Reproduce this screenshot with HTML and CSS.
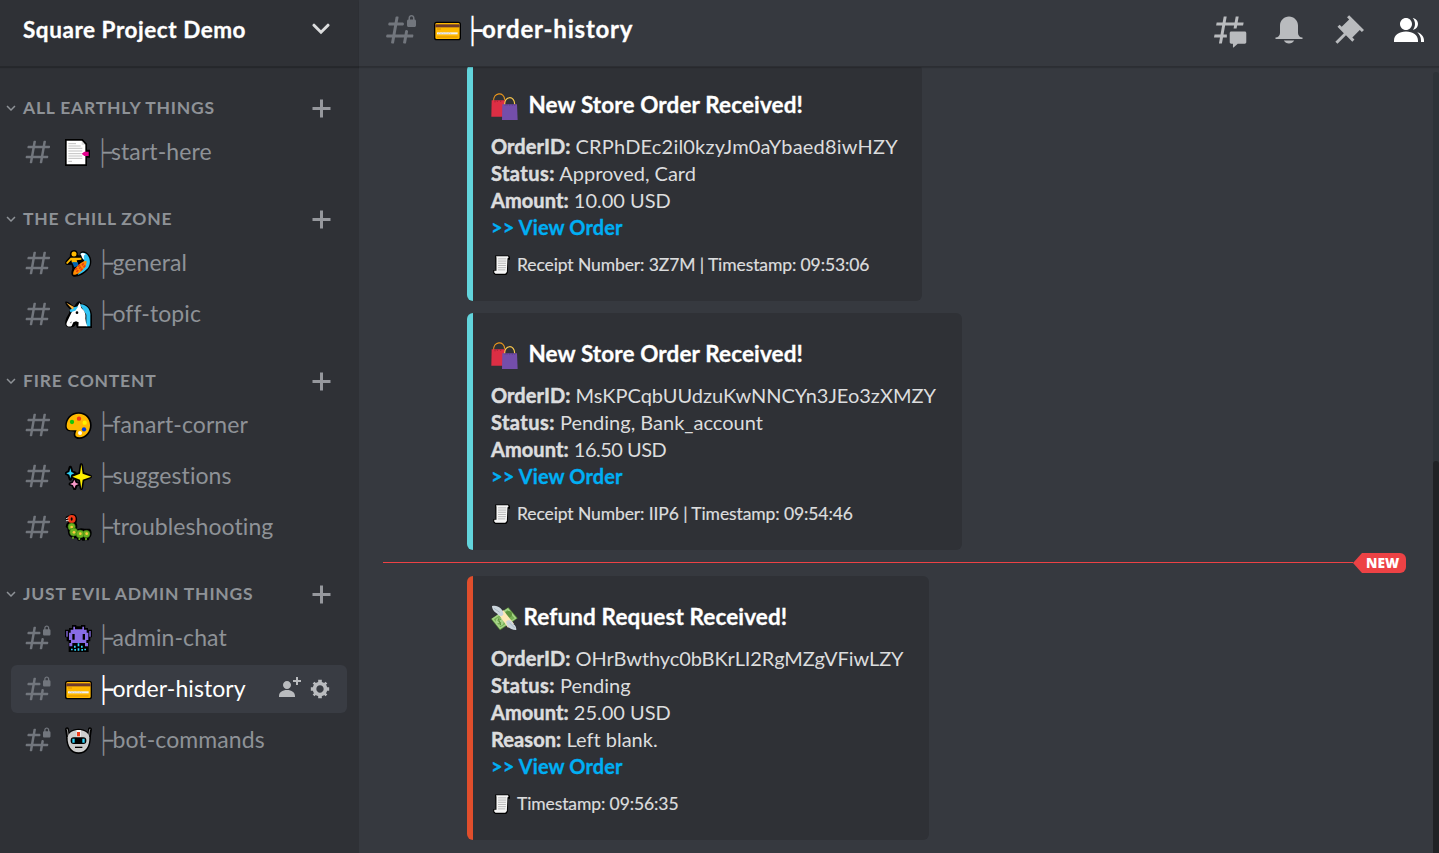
FILE: index.html
```html
<!DOCTYPE html>
<html lang="en">
<head>
<meta charset="utf-8">
<title>Square Project Demo</title>
<link rel="stylesheet" href="styles.css">
</head>
<body>
<svg class="defs" aria-hidden="true">
  <symbol id="hash" viewBox="0 0 24 24"><path fill-rule="evenodd" d="M5.88657 21C5.57547 21 5.3399 20.7189 5.39427 20.4126L6.00001 17H2.59511C2.28449 17 2.04905 16.7198 2.10259 16.4138L2.27759 15.4138C2.31946 15.1746 2.52722 15 2.77011 15H6.35001L7.41001 9H4.00511C3.69449 9 3.45905 8.71977 3.51259 8.41381L3.68759 7.41381C3.72946 7.17456 3.93722 7 4.18011 7H7.76001L8.39677 3.41262C8.43914 3.17391 8.64664 3 8.88907 3H9.87344C10.1845 3 10.4201 3.28107 10.3657 3.58738L9.76001 7H15.76L16.3968 3.41262C16.4391 3.17391 16.6466 3 16.8891 3H17.8734C18.1845 3 18.4201 3.28107 18.3657 3.58738L17.76 7H21.1649C21.4755 7 21.711 7.28023 21.6574 7.58619L21.4824 8.58619C21.4406 8.82544 21.2328 9 20.9899 9H17.41L16.35 15H19.7549C20.0655 15 20.301 15.2802 20.2474 15.5862L20.0724 16.5862C20.0306 16.8254 19.8228 17 19.5799 17H16L15.3632 20.5874C15.3209 20.8261 15.1134 21 14.8709 21H13.8866C13.5755 21 13.3399 20.7189 13.3943 20.4126L14 17H8.00001L7.36325 20.5874C7.32088 20.8261 7.11337 21 6.87094 21H5.88657ZM9.41045 9L8.35045 15H14.3504L15.4104 9H9.41045Z"/></symbol>
  <symbol id="hash-lock" viewBox="0 0 24 24"><path d="M14 8C14 7.44772 13.5523 7 13 7H9.76001L10.3657 3.58738C10.4201 3.28107 10.1845 3 9.87344 3H8.88907C8.64664 3 8.43914 3.17391 8.39677 3.41262L7.76001 7H4.18011C3.93722 7 3.72946 7.17456 3.68759 7.41381L3.51259 8.41381C3.45905 8.71977 3.69449 9 4.00511 9H7.41001L6.35001 15H2.77011C2.52722 15 2.31946 15.1746 2.27759 15.4138L2.10259 16.4138C2.04905 16.7198 2.28449 17 2.59511 17H6.00001L5.39427 20.4126C5.3399 20.7189 5.57547 21 5.88657 21H6.87094C7.11337 21 7.32088 20.8261 7.36325 20.5874L8.00001 17H14L13.3943 20.4126C13.3399 20.7189 13.5755 21 13.8866 21H14.8709C15.1134 21 15.3209 20.8261 15.3632 20.5874L16 17H19.5799C19.8228 17 20.0306 16.8254 20.0724 16.5862L20.2474 15.5862C20.301 15.2802 20.0655 15 19.7549 15H16.35L16.6758 13.1558C16.7823 12.5529 16.3186 12 15.7063 12C15.2286 12 14.8199 12.3429 14.7368 12.8133L14.3504 15H8.35045L9.41045 9H13C13.5523 9 14 8.55228 14 8Z"/><path fill-rule="evenodd" d="M21.025 5V4C21.025 2.88 20.05 2 19 2C17.95 2 17 2.88 17 4V5C16.4477 5 16 5.44772 16 6V9C16 9.55228 16.4477 10 17 10H21C21.5523 10 22 9.55228 22 9V5.975C22 5.43652 21.5635 5 21.025 5ZM20 5H18V4C18 3.42857 18.4667 3 19 3C19.5333 3 20 3.42857 20 4V5Z"/></symbol>
  <symbol id="chev" viewBox="0 0 24 24"><path d="M16.59 8.59L12 13.17L7.41 8.59L6 10L12 16L18 10Z"/></symbol>
  <symbol id="plus" viewBox="0 0 18 18"><path d="M15 10H10V15H8V10H3V8H8V3H10V8H15Z"/></symbol>
  <symbol id="credit" viewBox="0 0 81 81"><rect y="14" width="81" height="56" rx="8" fill="#000"/><rect x="4" y="18" width="73" height="48" rx="4" fill="#ffb900"/><path d="M4 22h73v9H4z" fill="#6b3a2e"/><path d="M9 36h12M9 60h62" stroke="#d98a00" stroke-width="2.5"/><path d="M9 46h62v6H9z" fill="#f2f2f2"/><path d="M12 51l5-4 4 4 5-4 5 4 5-4 5 4 5-4 6 4" fill="none" stroke="#b9b9c4" stroke-width="1.5"/></symbol>
  <symbol id="bags" viewBox="0 0 81 81"><path d="M8 25C6-3 40-5 41 20" fill="none" stroke="#e8951c" stroke-width="3.5"/><path d="M2 22h40v49H1z" fill="#dd2e44"/><path d="M12 23v5m7-5v4m10-4v4" stroke="#8f1c2d" stroke-width="2"/><path d="M41 36C39 8 72 6 71 35" fill="none" stroke="#ffcc4d" stroke-width="3.5"/><path d="M34 34h44l2 48H33z" fill="#744eaa"/><path d="M42 34v4m6-4v4m8-4v4m8-4v4m7-4v4" stroke="#50337d" stroke-width="2"/></symbol>
  <symbol id="receipt" viewBox="0 0 54 63"><path d="M7 1h43l4 5v9h-6l-1 41-5 7H7l-6-5V47h7z" fill="#000"/><path d="M10 4h37l3 3-4 4-2 43-5 5H8l-4-4v-5h7V9z" fill="#f5f5f5"/><path d="M16 12h26M16 19h26M16 26h25M16 33h25M16 40h25M16 47h23" stroke="#aaa" stroke-width="2.5"/></symbol>
</svg>
<div class="app">
  <aside class="sidebar">
    <header class="server">
      <span class="server-name">Square Project Demo</span>
      <svg class="server-chev" viewBox="0 0 18 12"><path d="M2 2.2l7 7 7-7" fill="none" stroke="#dcddde" stroke-width="3" stroke-linecap="round"/></svg>
    </header>
    <nav class="channels">
      <section class="group">
        <div class="category"><svg class="fold"><use href="#chev"/></svg><span>ALL EARTHLY THINGS</span><svg class="add"><use href="#plus"/></svg></div>
        <a class="channel narrow"><svg class="kind"><use href="#hash"/></svg>
          <svg class="emoji" viewBox="0 0 81 81"><path d="M0 0h53l13 14v18h9v24h-9v25H0z"/><path d="M5 5h45l11 12v59H5z" fill="#fff"/><path d="M50 5v12h11z" fill="#ddd"/><path d="M10 14h23M10 21h37M10 28h42M10 36h42M10 44h40M10 51h42M10 58h42M10 67h11" stroke="#b5b5b5" stroke-width="2.5"/><path d="M50 44l8-6h13v13H58z" fill="#e3008c"/></svg>
          <span class="tee">├</span><span class="name">start-here</span></a>
      </section>
      <section class="group">
        <div class="category"><svg class="fold"><use href="#chev"/></svg><span>THE CHILL ZONE</span><svg class="add"><use href="#plus"/></svg></div>
        <a class="channel"><svg class="kind"><use href="#hash"/></svg>
          <svg class="emoji" viewBox="0 0 81 81"><path d="M27 0c8 0 13 7 11 15l6 2c0-14 10-16 20-10 18 11 19 36 7 50-12 16-32 25-45 23-9-2-8-14-4-24L20 44 8 45C-2 44 0 36 3 32l12-13C13 7 18 1 27 0z"/><path d="M46 12c5-7 16-4 21 2 12 14 9 34-2 44-9 9-18 14-27 17l20-44c-8-5-6-14-12-19z" fill="#31c4f3"/><path d="M46 12c7-6 14-2 16 2-6 0-7 6-4 14-8-2-6-10-12-16z" fill="#fff"/><circle cx="27" cy="12" r="7.5" fill="#ffb900"/><path d="M17 23h16l16 0v6l-14 2 3 10-17-2-2-9L7 42l-4-3z" fill="#ffb900"/><path d="M21 36l17 1 3 10-13 5z" fill="#0063b1"/><path d="M64 32c5 12-19 44-39 42-5-9 16-38 39-42z" fill="#ff8c00"/><path d="M56 40L33 68M61 46L45 64M45 44L28 62" stroke="#e63b12" stroke-width="5" stroke-dasharray="8 5"/></svg>
          <span class="tee">├</span><span class="name">general</span></a>
        <a class="channel"><svg class="kind"><use href="#hash"/></svg>
          <svg class="emoji" viewBox="0 0 81 81"><path d="M1 2c7-5 24 14 27 14C34 6 38-1 44 1l7 8c20-1 31 21 30 38v34H36l-4-11C29 82 3 84 1 70c-3-9 5-24 11-33l3-12C9 19-1 8 1 2z"/><path d="M44 10c24-1 34 20 32 36v30H64V41z" fill="#31c4f3"/><path d="M44 5l5 16C60 30 63 41 61 52l2 13 4 11H40l1-12-8-3-8 3-5 11C9 80 1 74 6 63l14-29c3-8 8-11 15-14z" fill="#fff"/><path d="M14 27l12-8 14-3-9 13-15 5z" fill="#31c4f3"/><path d="M4 5l23 13-4 8z" fill="#ffb53c"/><circle cx="36" cy="35" r="4"/><path d="M14 66l6-5-1 6z" fill="#777"/></svg>
          <span class="tee">├</span><span class="name">off-topic</span></a>
      </section>
      <section class="group">
        <div class="category"><svg class="fold"><use href="#chev"/></svg><span>FIRE CONTENT</span><svg class="add"><use href="#plus"/></svg></div>
        <a class="channel"><svg class="kind"><use href="#hash"/></svg>
          <svg class="emoji" viewBox="0 0 81 81"><path d="M41 1c24 0 39 17 39 39S64 81 43 81c-17 0-19-13-15-22C15 59 1 59 1 43 0 20 17 1 41 1z"/><path d="M41 5c21 0 34 16 34 35S62 76 43 76c-17 0-12-13-8-21-12-1-30 4-30-14C6 21 20 5 41 5z" fill="#ffb900"/><circle cx="42" cy="20" r="6.5" fill="#f03a17"/><circle cx="21" cy="30" r="6.5" fill="#16c60c"/><circle cx="59" cy="32" r="6.5" fill="#fff100"/><circle cx="57" cy="52" r="6.5" fill="#0037da"/><circle cx="45" cy="63" r="6" fill="#fff"/></svg>
          <span class="tee">├</span><span class="name">fanart-corner</span></a>
        <a class="channel"><svg class="kind"><use href="#hash"/></svg>
          <svg class="emoji" viewBox="0 0 81 81"><g stroke="#000" stroke-width="10" stroke-linejoin="round"><path d="M49 6l4 26 23 9-23 9-4 26-4-26-23-9 23-9z"/><path d="M16 13l4 13 10 5-10 4-4 13-4-13-8-4 8-5zM29 51l4 8 9 4-9 4-4 10-4-10-9-4 9-4z"/></g><path d="M49 4l4 28 26 9-26 9-4 28-4-28-23-9 23-9z" fill="#fff100"/><path d="M16 15l3 12 9 4-9 4-3 11-3-11-9-4 9-4z" fill="#31d2f7"/><path d="M28 50l4 9 9 4-9 4-4 9-4-9-9-4 9-4z" fill="#f799c8"/></svg>
          <span class="tee">├</span><span class="name">suggestions</span></a>
        <a class="channel"><svg class="kind"><use href="#hash"/></svg>
          <svg class="emoji" viewBox="0 0 81 81"><path d="M20 0c17-1 19 17 14 27 4 7 3 12 2 19l12-3 11 1 15 0c8 5 8 21 0 28l-3 7h-6l-3-4-3 5h-7l-3-4-4 4h-6l-5-8c-12 2-20-2-24-11l-3-18-5-4 2-9 5-6-7-7V8z"/><circle cx="20" cy="15" r="12" fill="#f03a17"/><path d="M3 14l7-3M3 20l8 0" stroke="#ddd" stroke-width="3"/><ellipse cx="20" cy="15" rx="3" ry="5"/><g fill="#6bb11f" stroke="#2f6e12" stroke-width="1.5"><circle cx="20" cy="38" r="11"/><circle cx="26" cy="54" r="12"/><circle cx="64" cy="60" r="11"/><circle cx="45" cy="60" r="12"/></g><g fill="#ffc83d"><circle cx="20" cy="39" r="4"/><circle cx="27" cy="55" r="4"/><circle cx="46" cy="59" r="4"/><circle cx="65" cy="59" r="4"/></g><path d="M24 68v6M43 72v6M63 72v6" stroke="#6bb11f" stroke-width="5"/></svg>
          <span class="tee">├</span><span class="name">troubleshooting</span></a>
      </section>
      <section class="group">
        <div class="category"><svg class="fold"><use href="#chev"/></svg><span>JUST EVIL ADMIN THINGS</span><svg class="add"><use href="#plus"/></svg></div>
        <a class="channel"><svg class="kind"><use href="#hash-lock"/></svg>
          <svg class="emoji" viewBox="0 0 81 81"><path d="M21 0h13v4h14V0h13v9h8v5h12v23h-5v12h-5v32H11V49H5V37H0V14h12V9h9z"/><path d="M25 5h5v8h22V5h5v9h8v9h5v22h-6v9h5v10h-9V54H22v10h-9V54h5v-9h-6V23h5v-9h8zM4 18h4v17H4zM73 18h4v17h-4z" fill="#886ce4"/><path d="M22 27h7v17h-7zM53 27h7v17h-7z"/><path d="M38 55h5v9h-5zM27 62h5v6h-5zM48 62h5v6h-5zM38 70h5v7h-5zM18 71h5v5h-5zM28 72h5v5h-5zM49 72h5v5h-5zM58 71h5v5h-5z" fill="#31d2f7"/></svg>
          <span class="tee">├</span><span class="name">admin-chat</span></a>
        <a class="channel active"><svg class="kind"><use href="#hash-lock"/></svg><svg class="emoji"><use href="#credit"/></svg><span class="tee">├</span><span class="name">order-history</span>
          <svg class="invite" viewBox="0 0 24 24"><path d="M21 3H24V5H21V8H19V5H16V3H19V0H21V3ZM10 12C12.205 12 14 10.205 14 8C14 5.795 12.205 4 10 4C7.795 4 6 5.795 6 8C6 10.205 7.795 12 10 12ZM10 13C5.289 13 2 15.467 2 19V20H18V19C18 15.467 14.711 13 10 13Z"/></svg>
          <svg class="gear" viewBox="0 0 24 24"><path fill-rule="evenodd" d="M19.738 10H22V14H19.739C19.498 14.931 19.1 15.798 18.565 16.564L20 18L18 20L16.565 18.564C15.797 19.099 14.932 19.498 14 19.738V22H10V19.738C9.069 19.498 8.203 19.099 7.436 18.564L6 20L4 18L5.436 16.564C4.901 15.799 4.502 14.932 4.262 14H2V10H4.262C4.502 9.068 4.9 8.202 5.436 7.436L4 6L6 4L7.436 5.436C8.202 4.9 9.068 4.502 10 4.262V2H14V4.261C14.932 4.502 15.797 4.9 16.565 5.435L18 3.999L20 5.999L18.564 7.436C19.099 8.202 19.498 9.069 19.738 10ZM12 16C14.2091 16 16 14.2091 16 12C16 9.79086 14.2091 8 12 8C9.79086 8 8 9.79086 8 12C8 14.2091 9.79086 16 12 16Z"/></svg></a>
        <a class="channel"><svg class="kind"><use href="#hash-lock"/></svg>
          <svg class="emoji" viewBox="0 0 81 81"><path d="M0 7c1-8 12-8 12 0l1 8C28 2 54 2 68 15l1-8c0-8 11-8 12 0l-3 20c0 29-10 54-37 54S3 56 3 27z"/><path d="M5 7h2l3 20M76 7h-2l-3 20" fill="none" stroke="#8a8a8a" stroke-width="3"/><path d="M8 31C13 2 68 2 73 31c1 26-10 45-32 45S7 57 8 31z" fill="#cdcdcd"/><path d="M35 9h12v40H35z" fill="#f7f7f7"/><path d="M36 15h9v13h-9z" fill="#f03a17"/><rect x="17" y="31" width="47" height="20" rx="9"/><path d="M22 35h7v12h-7zM52 35h7v12h-7z" fill="#31d2f7"/><path d="M30 59h22v4H30z"/></svg>
          <span class="tee">├</span><span class="name">bot-commands</span></a>
      </section>
    </nav>
  </aside>
  <main class="main">
    <header class="topbar">
      <svg class="kind-lg"><use href="#hash-lock"/></svg><svg class="emoji top-emoji"><use href="#credit"/></svg><span class="tee">├</span><h1 class="title">order-history</h1>
      <div class="tools">
        <svg viewBox="0 0 24 24"><path d="M5.43309 21C5.35842 21 5.30189 20.9325 5.31494 20.859L5.99991 17H2.14274C2.06819 17 2.01168 16.9327 2.02453 16.8593L2.33253 15.0993C2.34258 15.0419 2.39244 15 2.45074 15H6.34991L7.40991 9H3.55274C3.47819 9 3.42168 8.93274 3.43453 8.85931L3.74253 7.09931C3.75258 7.04189 3.80244 7 3.86074 7H7.75991L8.45234 3.09903C8.46251 3.04174 8.51231 3 8.57049 3H10.3267C10.4014 3 10.4579 3.06746 10.4449 3.14097L9.75991 7H15.7599L16.4523 3.09903C16.4625 3.04174 16.5123 3 16.5705 3H18.3267C18.4014 3 18.4579 3.06746 18.4449 3.14097L17.7599 7H21.6171C21.6916 7 21.7481 7.06725 21.7353 7.14069L21.4273 8.90069C21.4172 8.95811 21.3674 9 21.3091 9H17.4099L17.0495 11.04H15.05L15.4104 9H9.41035L8.35035 15H10.5599V17H7.99991L7.30749 20.901C7.29732 20.9583 7.24752 21 7.18934 21H5.43309Z"/><path d="M13.4399 12.96C12.9097 12.96 12.4799 13.3898 12.4799 13.92V20.2213C12.4799 20.7515 12.9097 21.1813 13.4399 21.1813H14.3999C14.5325 21.1813 14.6399 21.2887 14.6399 21.4213V23.4597C14.6399 23.6677 14.8865 23.7773 15.0408 23.6378L17.4858 21.4289C17.6622 21.2695 17.8916 21.1813 18.1294 21.1813H22.5599C23.0901 21.1813 23.5199 20.7515 23.5199 20.2213V13.92C23.5199 13.3898 23.0901 12.96 22.5599 12.96H13.4399Z"/></svg>
        <svg viewBox="0 0 24 24"><path d="M18 9V14C18 15.657 19.344 17 21 17V18H3V17C4.656 17 6 15.657 6 14V9C6 5.686 8.686 3 12 3C15.314 3 18 5.686 18 9ZM11.9999 21C10.5239 21 9.24793 20.19 8.55493 19H15.4449C14.7519 20.19 13.4759 21 11.9999 21Z"/></svg>
        <svg viewBox="0 0 24 24"><path d="M22 12L12.101 2.10101L10.686 3.51401L12.101 4.92901L7.15096 9.87801V9.88001L5.73596 8.46501L4.32196 9.88001L8.56496 14.122L2.90796 19.778L4.32196 21.192L9.97896 15.536L14.222 19.778L15.636 18.364L14.222 16.95L19.171 12H19.172L20.586 13.414L22 12Z"/></svg>
        <svg class="on" viewBox="0 0 24 24"><path d="M14 8.006C14 10.211 12.206 12.006 10 12.006C7.795 12.006 6 10.211 6 8.006C6 5.801 7.794 4.006 10 4.006C12.206 4.006 14 5.801 14 8.006ZM2 19.006C2 15.473 5.29 13.006 10 13.006C14.711 13.006 18 15.473 18 19.006V20.006H2ZM20 20.006H22V19.006C22 16.443 20.27 14.442 17.521 13.535C19.062 14.913 20 16.806 20 19.006ZM14.883 11.908C16.666 11.504 18 9.908 18 8.006C18 5.969 16.469 4.282 14.497 4.037C15.432 5.095 16 6.485 16 8.006C16 9.449 15.489 10.774 14.638 11.81Z"/></svg>
      </div>
    </header>
    <div class="chat">
      <div class="messages">
        <article class="embed first">
          <h2><svg class="bag"><use href="#bags"/></svg>New Store Order Received!</h2>
          <p class="id-a"><b>OrderID:</b> <span>CRPhDEc2il0kzyJm0aYbaed8iwHZY</span></p>
          <p><b class="wide">Status:</b> Approved, Card</p>
          <p><b>Amount:</b> 10.00 USD</p>
          <p><a class="link">&gt;&gt; View Order</a></p>
          <footer><svg><use href="#receipt"/></svg>Receipt Number: 3Z7M | Timestamp: 09:53:06</footer>
        </article>
        <article class="embed second">
          <h2><svg class="bag"><use href="#bags"/></svg>New Store Order Received!</h2>
          <p><b>OrderID:</b> <span>MsKPCqbUUdzuKwNNCYn3JEo3zXMZY</span></p>
          <p><b class="wide">Status:</b> Pending, Bank_account</p>
          <p><b>Amount:</b> <span class="amount">16.50 USD</span></p>
          <p><a class="link">&gt;&gt; View Order</a></p>
          <footer><svg><use href="#receipt"/></svg>Receipt Number: IIP6 | Timestamp: 09:54:46</footer>
        </article>
        <div class="divider"><span class="rule"></span><svg class="tip" viewBox="0 0 9 20"><path d="M9 0L0 10l9 10z"/></svg><span class="new">NEW</span></div>
        <article class="embed refund">
          <h2><svg class="cash" viewBox="0 0 81 81"><path d="M0 42L52 7l28 33-53 36z" fill="#5c913b"/><path d="M2 41L51 9l26 31-50 33z" fill="#a6d388"/><path d="M8 43L50 15l21 25-43 27z" fill="#77b255"/><circle cx="53" cy="28" r="10" fill="#5c913b"/><circle cx="26" cy="50" r="12" fill="#a6d388"/><path d="M30 43c-10-4-12 5-5 7s5 9-5 6m2-16l7 20" fill="none" stroke="#5c913b" stroke-width="3"/><path d="M20 24l17-8 32 40-18 12z" fill="#ffe8b6"/><path d="M3 3c16-5 35 8 34 26-6 7-15 3-18-3C10 22 3 12 3 3zM76 75c-17 1-32-12-30-26 7-8 19-1 20 7 8 4 10 11 10 19z" fill="#ccd6dd"/><path d="M9 10l17 12M55 53l16 16" stroke="#99aab5" stroke-width="2"/></svg>Refund Request Received!</h2>
          <p class="id-c"><b>OrderID:</b> <span>OHrBwthyc0bBKrLI2RgMZgVFiwLZY</span></p>
          <p><b class="wide">Status:</b> Pending</p>
          <p><b>Amount:</b> 25.00 USD</p>
          <p><b>Reason:</b> Left blank.</p>
          <p><a class="link">&gt;&gt; View Order</a></p>
          <footer><svg><use href="#receipt"/></svg>Timestamp: 09:56:35</footer>
        </article>
      </div>
      <div class="scrollbar"><div class="thumb"></div></div>
    </div>
  </main>
</div>
</body>
</html>
```
FILE: styles.css
```css
* { box-sizing: border-box; }
body { margin: 0; font-family: Lato, "Noto Sans", sans-serif; font-variant-ligatures: none; background: #36393f; color: #dcddde; }
h1, h2, p { margin: 0; }
svg { display: block; flex: none; fill: currentColor; }
.defs { position: absolute; width: 0; height: 0; }
.app { display: flex; width: 100%; height: 100vh; overflow: hidden; white-space: nowrap; }

.sidebar { width: 359px; flex: none; background: #2f3136; color: #8e9297; }
.server { display: flex; align-items: center; justify-content: space-between; height: 67px; padding: 0 29px 7px 23px; border-bottom: 1px solid #26282c; box-shadow: 0 1px 1px rgba(0, 0, 0, .2); }
.server-name { color: #fff; font-size: 22.5px; font-weight: 700; letter-spacing: .55px; line-height: 30px; -webkit-text-stroke: .3px; }
.server-chev { width: 18px; height: 12px; margin-top: -2px; }
.channels { margin-top: -2px; }
.category { display: flex; align-items: center; height: 63px; padding: 23px 24px 0 2px; font-size: 17.5px; font-weight: 700; letter-spacing: .78px; }
.category span { flex: 1; margin-left: 3px; padding-bottom: 2px; }
.fold { width: 18px; height: 18px; }
.add { width: 27px; height: 27px; color: #96989d; }
.channel { display: flex; align-items: center; height: 48px; margin: 0 12px 3px 11px; padding-left: 12px; border-radius: 6px; }
.channel:last-child { margin-bottom: 0; }
.kind { width: 30px; height: 30px; color: #72767d; }
.emoji { width: 27px; height: 27px; margin: 0 11px 0 12px; fill: #000; }
.narrow .emoji { margin-right: 9.5px; }
.name { margin-left: -.5px; padding-bottom: 2px; font-size: 23px; letter-spacing: .08px; line-height: 30px; }
.tee { display: flex; flex: none; justify-content: flex-end; width: 10px; font: 28px/28px "Noto Sans CJK JP", sans-serif; transform: scaleX(.68); transform-origin: right; -webkit-text-stroke: .7px; }
.active { background: #393c43; color: #fff; }
.active .tee { -webkit-text-stroke: 1.2px; }
.invite { width: 24px; height: 24px; margin-left: auto; color: #b9bbbe; }
.gear { width: 22px; height: 22px; margin: 0 16px 0 8px; color: #b9bbbe; }

.main { display: flex; flex: 1; flex-direction: column; min-width: 0; background: #36393f; }
.topbar { position: relative; z-index: 1; display: flex; flex: none; align-items: center; height: 66px; padding: 0 12px 6px 24px; background: #36393f; box-shadow: 0 1px 0 #2c2e33, 0 2px 1px rgba(0, 0, 0, .15); color: #fff; }
.topbar .tee { -webkit-text-stroke: 1.6px; }
.kind-lg { width: 36px; height: 36px; color: #72767d; }
.top-emoji { margin: 0 11px 0 15px; }
.title { padding-bottom: 2px; font-size: 24px; font-weight: 700; letter-spacing: .8px; line-height: 30px; -webkit-text-stroke: .3px; }
.tools { display: flex; gap: 24px; margin-left: auto; color: #b9bbbe; }
.tools svg { width: 36px; height: 36px; }
.tools .on { color: #fff; }

.chat { display: flex; flex: 1; min-height: 0; }
.messages { flex: 1; padding-left: 24px; margin-top: -2px; }
.embed { margin-left: 84px; padding: 26px 0 24.5px 18px; border-left: 6px solid #62d4dc; border-radius: 6px; background: #2f3136; font-size: 20px; line-height: 27px; }
.first { width: 454.5px; margin-bottom: 12.5px; }
.second { width: 495px; }
.refund { width: 462px; border-left-color: #e04e2c; }
.embed h2 { display: flex; align-items: center; height: 28px; margin-bottom: 14.5px; color: #fff; font-size: 22.5px; font-weight: 700; letter-spacing: .12px; -webkit-text-stroke: .3px; }
.embed b { font-weight: 700; letter-spacing: .08px; -webkit-text-stroke: .5px; }
.embed .wide { letter-spacing: .45px; }
.id-a span { letter-spacing: .2px; }
.id-c span { letter-spacing: -.08px; }
.amount { letter-spacing: -.5px; }
.bag { width: 27px; height: 27px; margin: 5px 10.5px 0 0; }
.cash { width: 27px; height: 27px; margin: 5px 5.5px 0 0; }
.link { color: #00aff4; font-weight: 700; letter-spacing: .12px; -webkit-text-stroke: .3px; }
.embed footer { display: flex; align-items: center; height: 24px; margin-top: 11.5px; font-size: 17.5px; letter-spacing: -.1px; -webkit-text-stroke: .2px; }
.embed footer svg { width: 17px; height: 20px; margin: 2px 7px 0 2px; }

.divider { display: flex; align-items: center; height: 20px; margin: 3.5px 27px 3px 0; }
.rule { flex: 1; height: 2px; margin-bottom: 1px; border-top: 1px solid #ed4245; }
.tip { width: 9px; height: 20px; fill: #ed4245; }
.new { width: 44px; height: 20px; padding-left: 4px; border-radius: 0 6px 6px 0; background: #ed4245; color: #fff; font: 800 13.7px/20px "Open Sans", sans-serif; }
.scrollbar { display: flex; flex-direction: column; width: 6px; margin-top: 6px; padding-top: 389px; border-radius: 3px 3px 0 0; background: #2e3338; }
.thumb { flex: 1; border-radius: 3px 3px 0 0; background: #202225; }
```
